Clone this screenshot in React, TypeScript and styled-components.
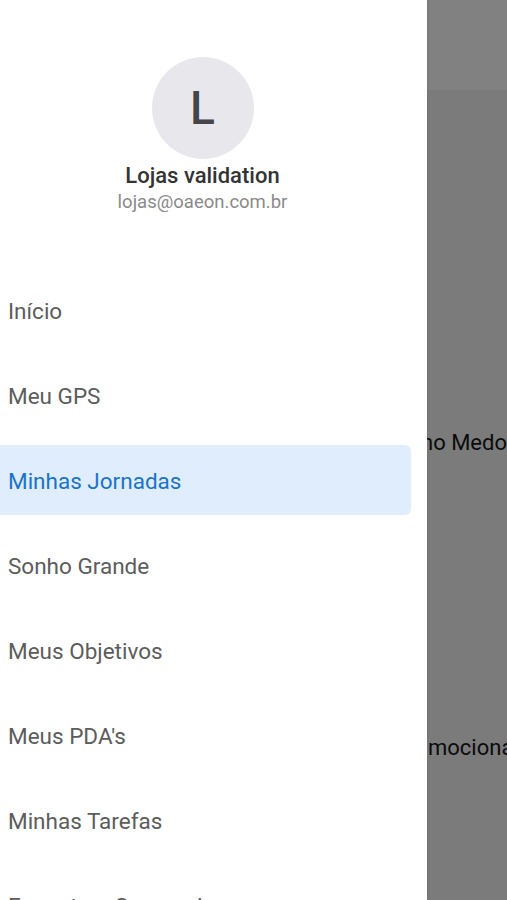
import React from "react"
import styled, { createGlobalStyle } from "styled-components"

const GlobalStyle = createGlobalStyle`
  html, body {
    margin: 0;
    padding: 0;
    background: #7b7b7b;
    font-family: Roboto, "Noto Sans", sans-serif;
  }
`

const Screen = styled.div`
  display: flex;
  width: 507px;
  height: 900px;
  overflow: hidden;
`

const Drawer = styled.nav`
  flex: 0 0 427px;
  height: 100%;
  background: #ffffff;
  display: flex;
  flex-direction: column;
  box-shadow: 1px 0 2px rgba(0, 0, 0, 0.08);
  z-index: 1;
`

const Profile = styled.div`
  display: flex;
  flex-direction: column;
  align-items: center;
  padding: 57px 22px 0 0;
  height: 219px;
  box-sizing: border-box;
`

const Avatar = styled.div`
  width: 102px;
  height: 102px;
  border-radius: 50%;
  background: #e8e8ec;
  color: #45454a;
  font-size: 46px;
  font-weight: 500;
  display: flex;
  align-items: center;
  justify-content: center;
`

const Name = styled.div`
  margin-top: 4px;
  font-size: 22px;
  font-weight: 500;
  color: #333333;
  line-height: 26px;
`

const Email = styled.div`
  margin-top: 2px;
  font-size: 18.5px;
  color: #8a8a8a;
  line-height: 22px;
`

const Menu = styled.ul`
  list-style: none;
  margin: 0;
  padding: 62px 16px 0 0;
  display: flex;
  flex-direction: column;
  gap: 15px;
`

const Item = styled.li<{ active?: boolean }>`
  height: 70px;
  display: flex;
  align-items: center;
  padding: 2px 0 0 8px;
  box-sizing: border-box;
  border-radius: 0 6px 6px 0;
  font-size: 22.5px;
  color: ${p => (p.active ? "#1b74c9" : "#5c5c5c")};
  background: ${p => (p.active ? "#dfedfd" : "transparent")};
`

const Backdrop = styled.div`
  flex: 1;
  display: flex;
  flex-direction: column;
  min-width: 0;
  overflow: hidden;
`

const TopBar = styled.div`
  height: 90px;
  background: #818181;
`

const Body = styled.div`
  flex: 1;
  background: #7b7b7b;
  padding-top: 340px;
  display: flex;
  flex-direction: column;
  gap: 279px;
`

const HiddenLine = styled.div<{ shift: number }>`
  font-size: 22px;
  line-height: 26px;
  color: #0b0b0b;
  white-space: nowrap;
  margin-left: ${p => p.shift}px;
`

const items = [
  "Início",
  "Meu GPS",
  "Minhas Jornadas",
  "Sonho Grande",
  "Meus Objetivos",
  "Meus PDA's",
  "Minhas Tarefas",
  "Encontros Semanais",
]

const App = () => {
  return (
    <>
      <GlobalStyle />
      <Screen>
        <Drawer>
          <Profile>
            <Avatar>L</Avatar>
            <Name>Lojas validation</Name>
            <Email>lojas@oaeon.com.br</Email>
          </Profile>
          <Menu>
            {items.map(label => (
              <Item key={label} active={label === "Minhas Jornadas"}>
                {label}
              </Item>
            ))}
          </Menu>
        </Drawer>
        <Backdrop>
          <TopBar />
          <Body>
            <HiddenLine shift={-6}>no Medo</HiddenLine>
            <HiddenLine shift={1}>mocional</HiddenLine>
          </Body>
        </Backdrop>
      </Screen>
    </>
  )
}

export default App
